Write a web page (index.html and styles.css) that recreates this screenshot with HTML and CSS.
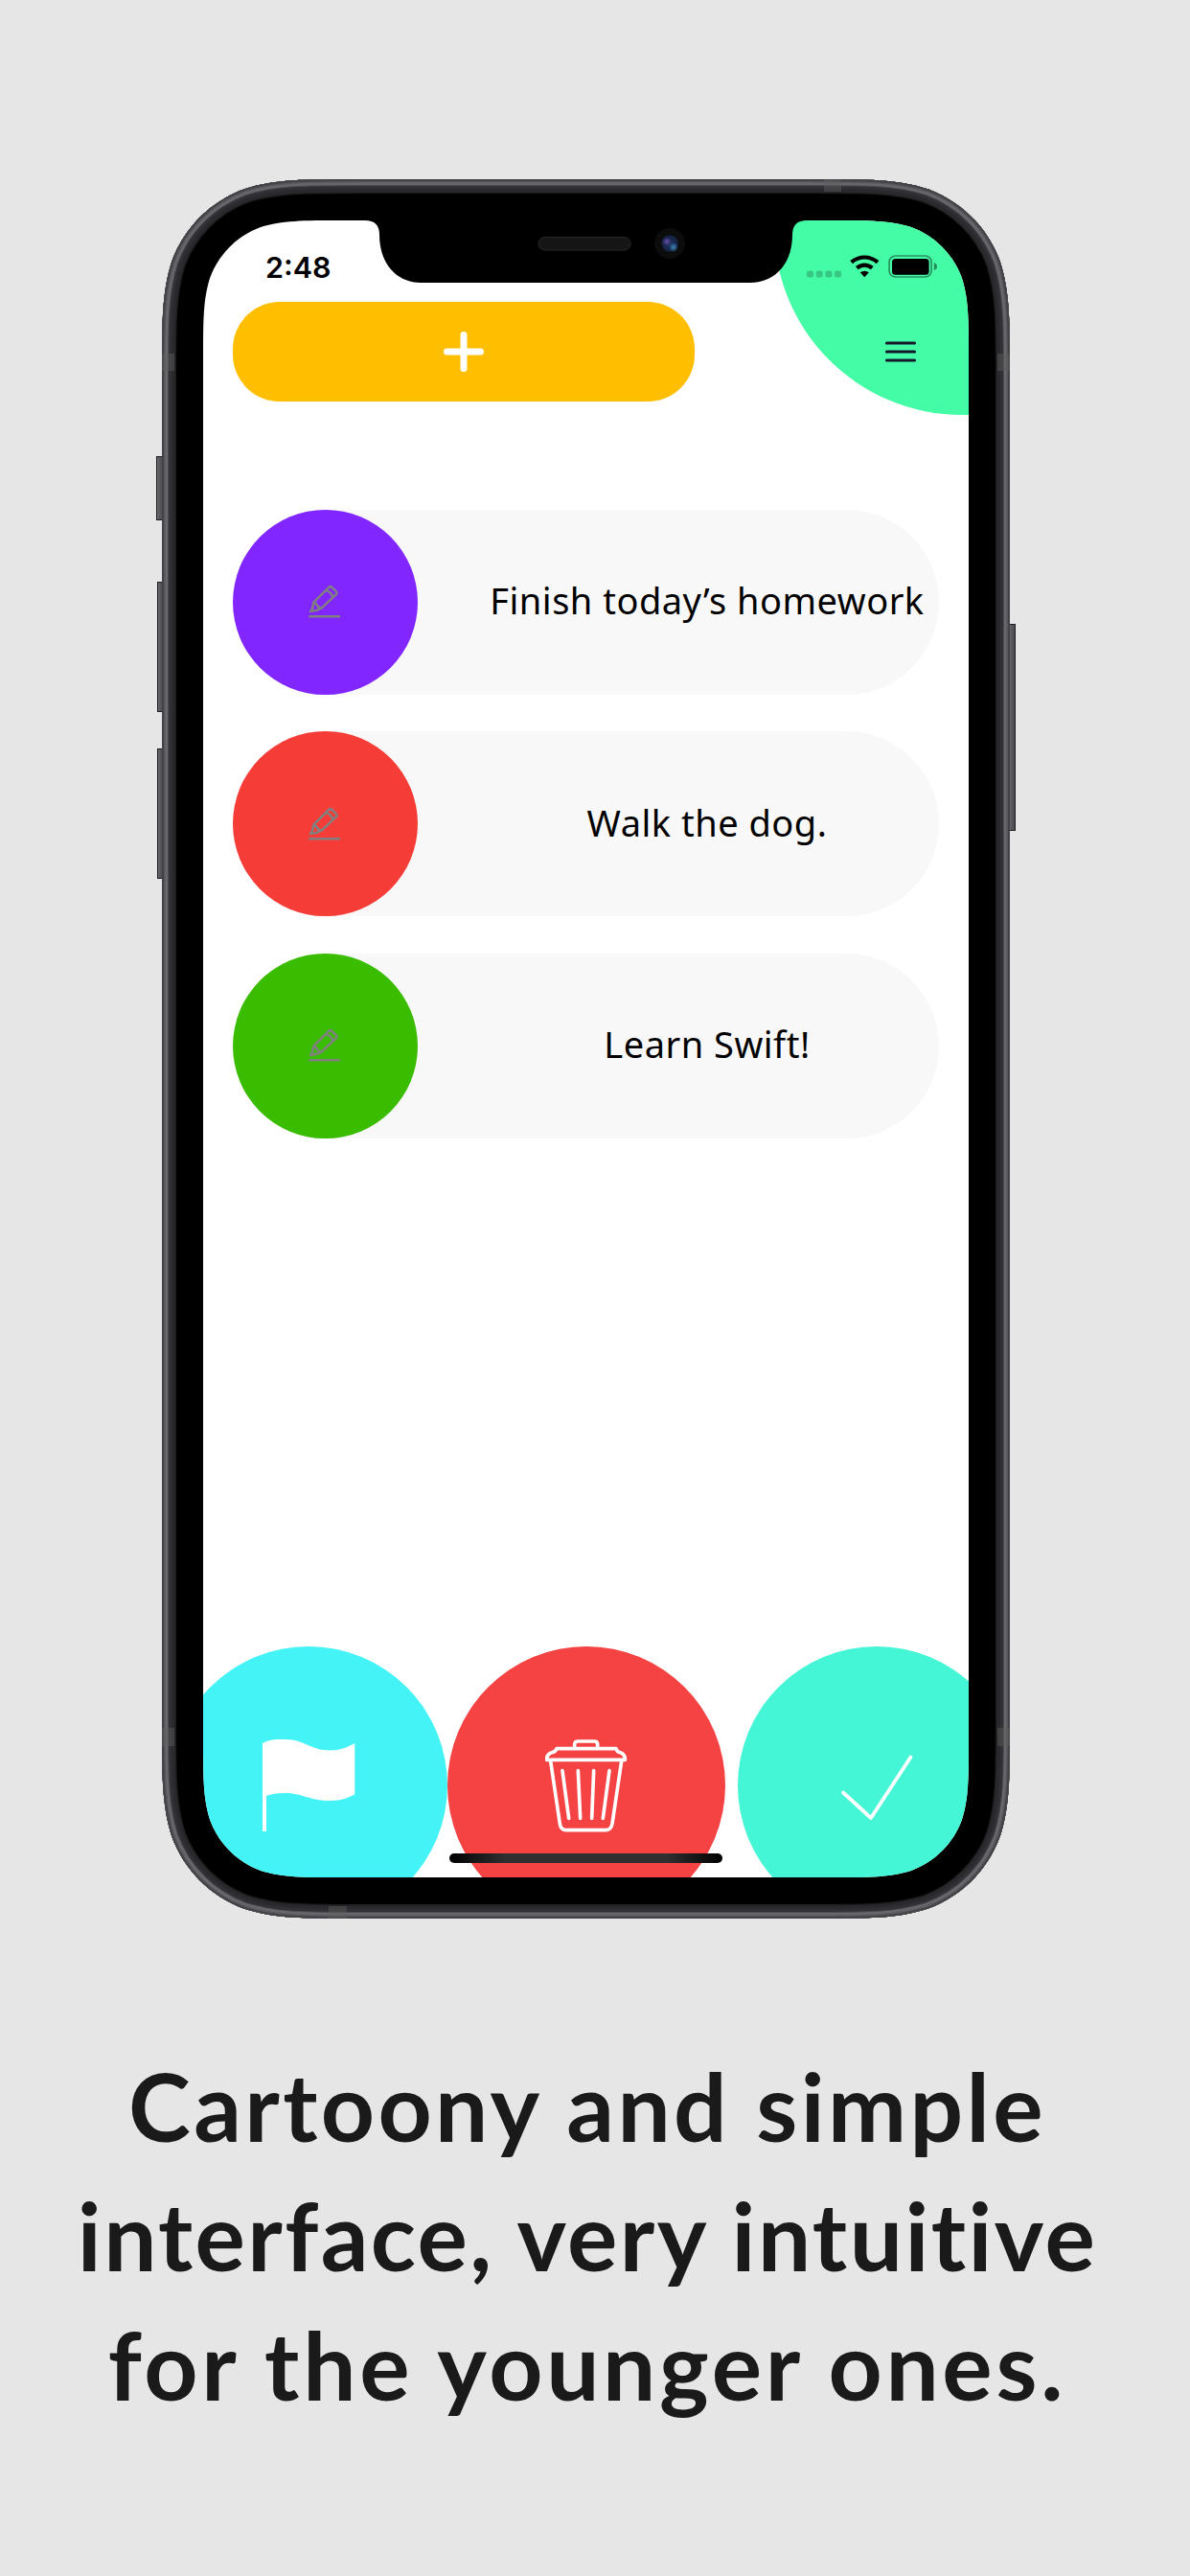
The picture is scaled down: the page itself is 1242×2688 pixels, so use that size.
FILE: index.html
```
<!DOCTYPE html>
<html lang="en">
<head>
<meta charset="utf-8">
<title>Tasks</title>
<link rel="stylesheet" href="styles.css">
</head>
<body>
<main class="poster">
  <section class="phone">
    <svg class="phone-frame" viewBox="0 0 885 1815" aria-hidden="true">
      <defs>
        <path id="body" d="M207.900 0H677.100C737 0 766.900 0 799.100 10.200C834.300 23 862 50.700 874.800 85.900C885 118.100 885 148 885 207.900V1607.100C885 1667 885 1696.900 874.800 1729.100C862 1764.300 834.300 1792 799.100 1804.800C766.900 1815 737 1815 677.100 1815H207.900C148 1815 118.100 1815 85.900 1804.800C50.700 1792 23 1764.300 10.200 1729.100C0 1696.900 0 1667 0 1607.100V207.900C0 148 0 118.100 10.200 85.900C23 50.700 50.700 23 85.900 10.200C118.100 0 148 0 207.900 0Z"/>
        <clipPath id="body-clip"><use href="#body"/></clipPath>
        <linearGradient id="key"><stop offset="0" stop-color="#77777c"/><stop offset=".35" stop-color="#5a5a5f"/><stop offset="1" stop-color="#48484d"/></linearGradient>
        <radialGradient id="lens" cx=".5" cy=".5" r=".5"><stop offset="0" stop-color="#1d3360"/><stop offset="1" stop-color="#14203f"/></radialGradient>
        <radialGradient id="violet"><stop offset="0" stop-color="#6a4aa8"/><stop offset="1" stop-color="#6a4aa8" stop-opacity="0"/></radialGradient>
        <radialGradient id="azure"><stop offset="0" stop-color="#3a86b4"/><stop offset="1" stop-color="#3a86b4" stop-opacity="0"/></radialGradient>
      </defs>
      <g class="keys">
        <rect x="-5.500" y="289.500" width="7" height="66"/>
        <rect x="-4.500" y="420.500" width="6" height="135"/>
        <rect x="-4.500" y="594.500" width="6" height="135"/>
        <rect x="884" y="464.500" width="6.500" height="215"/>
      </g>
      <g clip-path="url(#body-clip)" fill="none">
        <use href="#body" fill="#000"/>
        <use href="#body" stroke="#1f1e1d" stroke-width="30"/>
        <use href="#body" stroke="#29292e" stroke-width="27"/>
        <use href="#body" stroke="#303035" stroke-width="20"/>
        <use href="#body" stroke="#4c4c51" stroke-width="14"/>
        <use href="#body" stroke="#66666b" stroke-width="12"/>
        <use href="#body" stroke="#57575c" stroke-width="7"/>
        <use href="#body" stroke="#434347" stroke-width="4"/>
        <g class="bands">
          <path d="M0 182h13v18H0zM872 182h13v18h-13zM0 1616h13v19H0zM872 1616h13v19h-13zM691 0h18v13h-18zM174 1802h19v13h-19z"/>
        </g>
      </g>
    </svg>
    <div class="screen">
      <div class="menu-blob"></div>
      <svg class="notch" viewBox="0 0 799 66" aria-hidden="true">
        <path d="M169 0C179 0 184 5 184 15C184 45 202 65 227 65H571C597 65 615 45 615 15C615 5 620 0 630 0Z"/>
        <rect x="350" y="17.500" width="96" height="13.500" rx="6.700" fill="#151515" stroke="#292929"/>
        <circle cx="487" cy="24" r="16" fill="#0c0c0c"/>
        <circle cx="487" cy="24" r="8.700" fill="url(#lens)"/>
        <circle cx="484" cy="22" r="4.500" fill="url(#violet)"/>
        <circle cx="491" cy="28" r="5" fill="url(#azure)"/>
      </svg>
      <header class="status">
        <span class="time">2:48</span>
        <svg class="signals" viewBox="0 0 137 26" aria-hidden="true">
          <g opacity=".2"><rect y="17.500" width="7" height="7" rx="2"/><rect x="9.700" y="17.500" width="7" height="7" rx="2"/><rect x="19.400" y="17.500" width="7" height="7" rx="2"/><rect x="29" y="17.500" width="7" height="7" rx="2"/></g>
          <g fill="none" stroke="#000" stroke-width="4.200">
            <path d="M46.600 8.600C54.500 1.800 66.100 1.800 74 8.600"/>
            <path d="M52.300 14.600C57 10.500 63.600 10.500 68.300 14.600"/>
          </g>
          <path d="M55.800 19.300Q60.300 16.200 64.800 19.300L60.300 24.300Z"/>
          <rect x="86.100" y="2" width="44" height="22" rx="6.500" fill="none" stroke="#000" stroke-opacity=".42" stroke-width="1.700"/>
          <rect x="89" y="5" width="38.600" height="16.700" rx="3.500"/>
          <path d="M132.800 9Q136 10 136 13T132.800 17Z" opacity=".45"/>
        </svg>
      </header>
      <div class="toolbar">
        <div class="add">
          <svg width="44" height="44" viewBox="0 0 44 44" fill="none" stroke="#fff" stroke-width="7" stroke-linecap="round"><path d="M22 4.500V39.500M4.500 22H39.500"/></svg>
        </div>
        <svg class="menu" viewBox="0 0 34 24" fill="none" stroke="#15172c" stroke-width="3.200" stroke-linecap="round"><path d="M2.500 3H31.500M2.500 12H31.500M2.500 21H31.500"/></svg>
      </div>
      <svg width="0" height="0" class="symbols">
        <symbol id="pencil" viewBox="32 32 106 108">
          <g fill="none" stroke="#808080" stroke-width="7.500" stroke-linejoin="round">
            <path d="M36 132H135"/>
            <path d="M41 116Q49 109 51 88L99 40Q104 36 109 40L122 53Q126 58 122 63L76 106Q58 116 41 116ZM53 88Q60 91 63 98T75 106M89 50Q107 53 112 72"/>
          </g>
        </symbol>
      </svg>
      <ul class="tasks">
        <li class="task"><span class="dot purple"><svg class="pencil"><use href="#pencil"/></svg></span><span class="label">Finish today’s homework</span></li>
        <li class="task"><span class="dot red"><svg class="pencil"><use href="#pencil"/></svg></span><span class="label">Walk the dog.</span></li>
        <li class="task"><span class="dot green"><svg class="pencil"><use href="#pencil"/></svg></span><span class="label">Learn Swift!</span></li>
      </ul>
      <nav class="actions">
        <div class="action flag">
          <svg width="98" height="98" viewBox="0 0 98 98" fill="#fff"><path d="M1 5C9 .5 16 1 24 1C46 1 50 12.500 72 12.500C82 12.500 90 9 97.300 5V58.300C90 62.500 82 65 72 65C50 65 42 57 24 57C16 57 10 58 5 60V97H1Z"/></svg>
        </div>
        <div class="action bin">
          <svg width="86" height="98" viewBox="57 41 258 294" fill="none" stroke="#fff" stroke-width="11" stroke-linejoin="round" stroke-linecap="round"><path d="M149 70V60Q149 50 160 50H211Q221 50 221 60V70M93 73H279Q282 84 292 85Q308 90 307 108H62Q61 90 78 85Q89 84 93 73ZM74 112L103 308Q106 328 122 328H247Q263 328 267 308L296 112M111 142L131 291M160 142L167 291M209 142L203 291M258 142L238 291"/></svg>
        </div>
        <div class="action done">
          <svg width="98" height="98" viewBox="-49 -49 98 98" fill="none" stroke="#fff" stroke-width="3.800" stroke-linecap="round" stroke-linejoin="round"><path d="M-35 7.500L-6 34L35.500 -29.500"/></svg>
        </div>
      </nav>
      <div class="home-bar"></div>
    </div>
  </section>
  <h1 class="headline"><span class="line one">Cartoony and simple</span><span class="line two">interface, very intuitive</span><span class="line three">for the younger ones.</span></h1>
</main>
</body>
</html>
```
FILE: styles.css
```
body {
  margin: 0;
  background: #e6e6e6;
}

.poster {
  box-sizing: border-box;
  width: 1223px;
  height: 2688px;
  padding-top: 187px;
  display: flex;
  flex-direction: column;
  align-items: center;
}

.phone {
  position: relative;
  box-sizing: border-box;
  flex: none;
  width: 885px;
  height: 1815px;
  padding: 43px;
}

.phone-frame {
  position: absolute;
  inset: 0;
  width: 885px;
  height: 1815px;
  overflow: visible;
}

.keys {
  fill: url(#key);
  stroke: #1c1c20;
  stroke-width: 1;
}

.bands {
  fill: #606060;
  opacity: .45;
}

.screen {
  position: relative;
  display: flex;
  flex-direction: column;
  width: 799px;
  height: 1729px;
  background: #fff;
  overflow: hidden;
  clip-path: path("M145.200 0H653.800C695.600 0 716.500 0 739 7.100C763.600 16.100 782.900 35.400 791.900 60C799 82.500 799 103.400 799 145.200V1583.800C799 1625.600 799 1646.500 791.900 1669C782.900 1693.600 763.600 1712.900 739 1721.900C716.500 1729 695.600 1729 653.800 1729H145.200C103.400 1729 82.500 1729 60 1721.900C35.400 1712.900 16.100 1693.600 7.100 1669C0 1646.500 0 1625.600 0 1583.800V145.200C0 103.400 0 82.500 7.100 60C16.100 35.400 35.400 16.100 60 7.100C82.500 0 103.400 0 145.200 0Z");
}

.menu-blob {
  position: absolute;
  left: 596px;
  top: -189px;
  width: 392px;
  height: 392px;
  border-radius: 50%;
  background: #45fca6;
}

.notch {
  position: absolute;
  left: 0;
  top: 0;
  width: 799px;
  height: 66px;
}

.status {
  position: relative;
  display: flex;
  justify-content: space-between;
  align-items: flex-start;
  height: 50px;
  padding: 35px 32px 0 65px;
}

.time {
  font: 600 30.500px/28px Inter, sans-serif;
  color: #000;
}

.signals {
  width: 137px;
  height: 26px;
}

.toolbar {
  position: relative;
  display: flex;
  justify-content: space-between;
  align-items: center;
  height: 104px;
  padding: 0 54px 0 31px;
}

.add {
  display: flex;
  justify-content: center;
  align-items: center;
  width: 482px;
  height: 104px;
  border-radius: 49px;
  background: #ffbf00;
}

.menu {
  width: 34px;
  height: 24px;
}

.symbols {
  position: absolute;
}

.tasks {
  display: flex;
  flex-direction: column;
  gap: 38.500px;
  list-style: none;
  margin: 112.500px 31px 0;
  padding: 0;
}

.task {
  display: flex;
  align-items: center;
  height: 193px;
  border-radius: 97px;
  background: #f8f8f8;
}

.dot {
  display: flex;
  justify-content: center;
  align-items: center;
  width: 193px;
  height: 193px;
  border-radius: 50%;
}

.purple { background: #8126ff; }
.red { background: #f63c37; }
.green { background: #3abc00; }

.pencil {
  width: 35px;
  height: 36px;
  margin-right: 2px;
}

.label {
  flex: 1;
  padding: 0 0 4px 60px;
  text-align: center;
  white-space: nowrap;
  font: 38px "Noto Sans", sans-serif;
  letter-spacing: .5px;
  color: #000;
}

.actions {
  display: flex;
  height: 241px;
  margin: auto 0 0 -35px;
}

.action {
  flex: none;
  display: flex;
  justify-content: center;
  align-items: center;
  width: 290px;
  height: 290px;
  border-radius: 50%;
}

.flag { background: #44f3f6; }
.bin { background: #f54243; }
.done { background: #44f6d5; margin-left: 13px; }

.home-bar {
  position: absolute;
  left: 257px;
  bottom: 15px;
  width: 285px;
  height: 10px;
  border-radius: 5px;
  background: linear-gradient(90deg, #000, #2f2f2f 20%, #2f2f2f 80%, #000);
}

.headline {
  margin: 128px 0 0;
  padding-left: 3px;
  font: 700 98px/135px Lato, sans-serif;
  color: #1a1a1a;
  text-align: center;
}

.line {
  display: block;
  white-space: nowrap;
}

.one { letter-spacing: 3.400px; }
.two { letter-spacing: 2.400px; }
.three { letter-spacing: 3.700px; }
```
